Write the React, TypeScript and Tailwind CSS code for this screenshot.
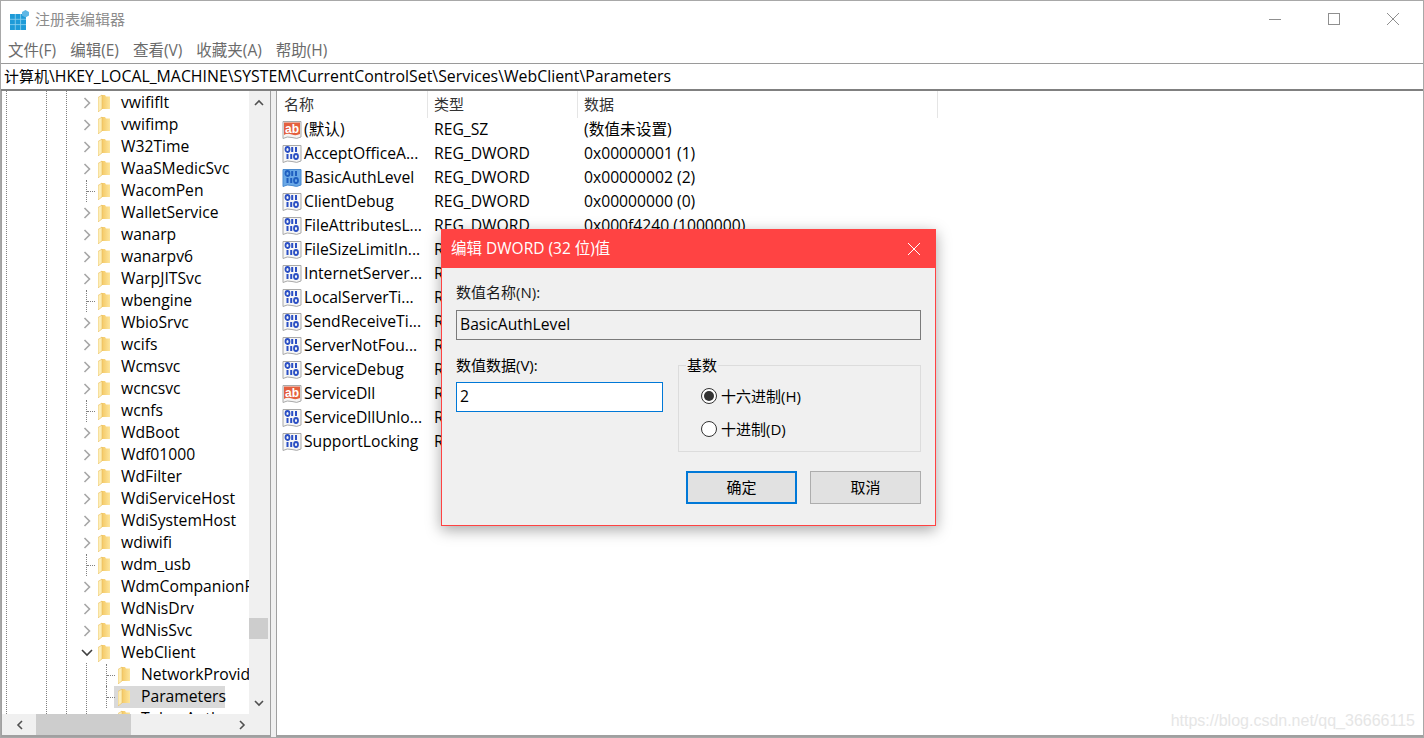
const treeRows = [
  "vwififlt", "vwifimp", "W32Time", "WaaSMedicSvc", "WacomPen", "WalletService", "wanarp", "wanarpv6",
  "WarpJITSvc", "wbengine", "WbioSrvc", "wcifs", "Wcmsvc", "wcncsvc", "wcnfs", "WdBoot", "Wdf01000",
  "WdFilter", "WdiServiceHost", "WdiSystemHost", "wdiwifi", "wdm_usb", "WdmCompanionFilter", "WdNisDrv", "WdNisSvc",
];
const noArrow = ["WacomPen", "wbengine", "wcnfs", "wdm_usb"];

// rows below the fifth have their data column hidden behind the dialog
const values = [
  { name: "(默认)", type: "REG_SZ", data: "(数值未设置)", icon: "sz" },
  { name: "AcceptOfficeA...", type: "REG_DWORD", data: "0x00000001 (1)", icon: "bin" },
  { name: "BasicAuthLevel", type: "REG_DWORD", data: "0x00000002 (2)", icon: "sel" },
  { name: "ClientDebug", type: "REG_DWORD", data: "0x00000000 (0)", icon: "bin" },
  { name: "FileAttributesL...", type: "REG_DWORD", data: "0x000f4240 (1000000)", icon: "bin" },
  { name: "FileSizeLimitIn...", type: "R", data: "", icon: "bin" },
  { name: "InternetServer...", type: "R", data: "", icon: "bin" },
  { name: "LocalServerTi...", type: "R", data: "", icon: "bin" },
  { name: "SendReceiveTi...", type: "R", data: "", icon: "bin" },
  { name: "ServerNotFou...", type: "R", data: "", icon: "bin" },
  { name: "ServiceDebug", type: "R", data: "", icon: "bin" },
  { name: "ServiceDll", type: "R", data: "", icon: "sz" },
  { name: "ServiceDllUnlo...", type: "R", data: "", icon: "bin" },
  { name: "SupportLocking", type: "R", data: "", icon: "bin" },
];

function Folder() {
  return (
    <svg width="12" height="18" viewBox="0 0 12 18" className="shrink-0">
      <defs>
        <linearGradient id="folderBody" x1="0" y1="0" x2="1" y2="0">
          <stop offset="0" stopColor="#f3c660" />
          <stop offset="1" stopColor="#fde59c" />
        </linearGradient>
      </defs>
      <path d="M3 1 H7 L8 2.500 H12 V15 H3 Z" fill="url(#folderBody)" />
      <path d="M0 3.500 L4 1 V15 L0 18 Z" fill="#fdeeb8" stroke="#e9bd5c" strokeWidth="0.600" />
    </svg>
  );
}

function Chevron({ open }: { open?: boolean }) {
  return open ? (
    <svg width="12" height="8" viewBox="0 0 12 8">
      <path d="M1 1 L6 6 L11 1" fill="none" stroke="#404040" strokeWidth="1.600" />
    </svg>
  ) : (
    <svg width="8" height="12" viewBox="0 0 8 12">
      <path d="M1.500 1 L6.500 6 L1.500 11" fill="none" stroke="#a6a6a6" strokeWidth="1.600" />
    </svg>
  );
}

function ValueIcon({ kind }: { kind: string }) {
  if (kind === "sz") {
    return (
      <svg width="20" height="20" viewBox="0 0 20 20" className="shrink-0">
        <path d="M1 1.500 H19 V17 Q15 19.500 10 17.500 Q5 16 1 18.500 Z" fill="#f4f4f4" stroke="#a9a9a9" />
        <path d="M2 2.500 H18 V14 Q14 16 10 14.500 Q5 13 2 15 Z" fill="#e4603f" />
        <text x="10" y="12.500" textAnchor="middle" fontSize="12" fontWeight="700" fill="#fff" fontFamily="'Liberation Sans', sans-serif">ab</text>
      </svg>
    );
  }
  const sel = kind === "sel";
  const ink = sel ? "#1f5fc0" : "#2b4fc4";
  return (
    <svg width="20" height="20" viewBox="0 0 20 20" className="shrink-0">
      <path d="M1 1.500 H19 V17 Q15 19.500 10 17.500 Q5 16 1 18.500 Z" fill={sel ? "#6aa8e6" : "#f6f6f6"} stroke={sel ? "#4a8bd0" : "#a9a9a9"} />
      <ellipse cx="5.500" cy="5.500" rx="2" ry="2.500" fill="none" stroke={ink} strokeWidth="1.800" />
      <rect x="9.200" y="3" width="2" height="5" fill={ink} />
      <rect x="13" y="3" width="2" height="5" fill={ink} />
      <rect x="4.500" y="10" width="2" height="5" fill={ink} />
      <rect x="8.200" y="10" width="2" height="5" fill={ink} />
      <ellipse cx="14" cy="12.500" rx="2" ry="2.500" fill="none" stroke={ink} strokeWidth="1.800" />
    </svg>
  );
}

function TreeRow({ name, indent, arrow, selected }: { name: string; indent: number; arrow?: "open" | "closed" | "none"; selected?: boolean }) {
  return (
    <div className="flex h-[22px] items-center" style={{ paddingLeft: indent }}>
      <div className="relative flex h-full w-[18px] shrink-0 items-center justify-center pl-[3px]">
        {arrow === "open" && <Chevron open />}
        {arrow === "closed" && <Chevron />}
        {!arrow && (
          <>
            <div className="absolute top-0 bottom-0 left-[10px] border-l border-dotted border-[#808080]" />
            <div className="absolute top-[11px] left-[11px] w-[8px] border-t border-dotted border-[#808080]" />
          </>
        )}
      </div>
      <div className={`flex h-[22px] items-center pl-[4px] ${selected ? "w-[111px] bg-[#d9d9d9]" : ""}`}>
        <Folder />
        <span className="ml-[11px] whitespace-nowrap">{name}</span>
      </div>
    </div>
  );
}

function App() {
  return (
    <div className="relative flex h-[738px] w-[1424px] flex-col overflow-hidden border border-[#a8a8a8] bg-white text-[15.7px] leading-none text-black [font-family:'Open_Sans','Noto_Sans_CJK_SC',sans-serif]">
      {/* title bar */}
      <div className="flex h-[37px] shrink-0 items-center pl-[9px]">
        <svg width="20" height="20" viewBox="0 0 20 20">
          <path d="M0 4 H16 V20 H0 Z" fill="#1e9bd8" />
          <path d="M5.300 4 V20 M10.600 4 V20 M0 9.300 H16 M0 14.600 H16" stroke="#8fd2f0" strokeWidth="0.800" />
          <path d="M15.500 0 L19 2 V5.500 L15.500 7.500 L12 5.500 V2 Z" fill="#5fb7e5" />
        </svg>
        <span className="ml-[5px] text-[15px] text-[#8c8c8c]">注册表编辑器</span>
        <div className="ml-auto flex items-center pr-[24px] pb-[1px]">
          <div className="mr-[47px] h-px w-[12px] bg-[#8f8f8f]" />
          <div className="mr-[47px] h-[12px] w-[12px] border border-[#8f8f8f]" />
          <svg width="12" height="12" viewBox="0 0 12 12">
            <path d="M0 0 L12 12 M12 0 L0 12" stroke="#8f8f8f" />
          </svg>
        </div>
      </div>
      {/* menu */}
      <div className="flex h-[25px] shrink-0 items-center gap-[14px] pl-[7px] text-[15.5px] text-[#6b6b6b]">
        {["文件(F)", "编辑(E)", "查看(V)", "收藏夹(A)", "帮助(H)"].map((m) => (
          <span key={m}>{m}</span>
        ))}
      </div>
      {/* address */}
      <div className="flex h-[28px] shrink-0 items-center border-t border-b-2 border-t-[#9a9a9a] border-b-[#808080] pl-[3px] text-[15.85px] whitespace-nowrap">
        <span className="text-[15px]">计算机</span>\HKEY_LOCAL_MACHINE\SYSTEM\CurrentControlSet\Services\WebClient\Parameters
      </div>
      {/* panes */}
      <div className="flex min-h-0 flex-1">
        {/* tree */}
        <div className="relative flex w-[270px] shrink-0 flex-col border-r border-b-2 border-l border-[#a0a0a0]">
          <div className="flex min-h-0 flex-1">
            <div className="relative min-w-0 flex-1 overflow-hidden pt-px">
              <div className="absolute top-0 bottom-0 left-[4px] border-l border-dotted border-[#808080]" />
              <div className="absolute top-0 bottom-0 left-[44px] border-l border-dotted border-[#808080]" />
              <div className="absolute top-0 bottom-0 left-[64px] border-l border-dotted border-[#808080]" />
              <div className="absolute top-[572px] bottom-0 left-[84px] border-l border-dotted border-[#808080]" />
              {treeRows.map((name) => (
                <TreeRow key={name} name={name} indent={74} arrow={noArrow.includes(name) ? undefined : "closed"} />
              ))}
              <TreeRow name="WebClient" indent={74} arrow="open" />
              <TreeRow name="NetworkProvider" indent={94} />
              <TreeRow name="Parameters" indent={94} selected />
              <TreeRow name="TokenAuth" indent={94} arrow="none" />
            </div>
            {/* vertical scrollbar */}
            <div className="flex w-[21px] shrink-0 flex-col bg-[#f0f0f0] pr-[2px]">
              <div className="flex h-[22px] items-center justify-center">
                <svg width="10" height="7" viewBox="0 0 10 7"><path d="M1 6 L5 2 L9 6" fill="none" stroke="#505050" strokeWidth="1.600" /></svg>
              </div>
              <div className="mt-[505px] h-[21px] bg-[#cdcdcd]" />
              <div className="mt-auto flex h-[22px] items-center justify-center">
                <svg width="10" height="7" viewBox="0 0 10 7"><path d="M1 1 L5 5 L9 1" fill="none" stroke="#505050" strokeWidth="1.600" /></svg>
              </div>
            </div>
          </div>
          {/* horizontal scrollbar */}
          <div className="flex h-[21px] shrink-0 items-center bg-[#f0f0f0]">
            <div className="flex w-[34px] justify-center">
              <svg width="7" height="10" viewBox="0 0 7 10"><path d="M6 1 L2 5 L6 9" fill="none" stroke="#505050" strokeWidth="1.600" /></svg>
            </div>
            <div className="h-full w-[95px] bg-[#cdcdcd]" />
            <div className="ml-auto flex w-[55px] justify-center">
              <svg width="7" height="10" viewBox="0 0 7 10"><path d="M1 1 L5 5 L1 9" fill="none" stroke="#505050" strokeWidth="1.600" /></svg>
            </div>
          </div>
        </div>
        {/* splitter */}
        <div className="w-[5px] shrink-0 bg-[#f0f0f0]" />
        {/* values */}
        <div className="relative min-w-0 flex-1 border-b-2 border-l border-[#a0a0a0]">
          <div className="flex h-[27px] items-center text-[15px] text-[#333]">
            <div className="h-full w-[151px] border-r border-[#e5e5e5] pt-[6px] pl-[7px]">名称</div>
            <div className="h-full w-[150px] border-r border-[#e5e5e5] pt-[6px] pl-[6px]">类型</div>
            <div className="h-full w-[360px] border-r border-[#e5e5e5] pt-[6px] pl-[6px]">数据</div>
          </div>
          {values.map((v) => (
            <div key={v.name} className="flex h-[24px] items-center">
              <div className="flex w-[151px] items-center pl-[5px]">
                <ValueIcon kind={v.icon} />
                <span className="ml-[2px] whitespace-nowrap">{v.name}</span>
              </div>
              <div className="w-[150px] pl-[6px] whitespace-nowrap">{v.type}</div>
              <div className="pl-[6px] whitespace-nowrap">{v.data}</div>
            </div>
          ))}
          <div className="absolute right-[8px] bottom-[6px] text-[16px] text-[#e6e6e6] [font-family:'Liberation_Sans',sans-serif]">
            https://blog.csdn.net/qq_36666115
          </div>
        </div>
      </div>

      {/* dialog */}
      <div className="absolute top-[228px] left-[440px] flex h-[297px] w-[495px] flex-col border border-[#ff4343] bg-[#f0f0f0] shadow-[0_4px_14px_rgba(0,0,0,0.35)]">
        <div className="flex h-[38px] shrink-0 items-center justify-between bg-[#ff4343] pr-[15px] pb-px pl-[9px] text-[15.5px] text-white">
          <span>编辑 DWORD (32 位)值</span>
          <svg width="12" height="12" viewBox="0 0 12 12"><path d="M0 0 L12 12 M12 0 L0 12" stroke="#fff" /></svg>
        </div>
        <div className="flex flex-1 flex-col px-[14px] pt-[17px]">
          <div className="text-[15px] text-[#1a1a1a]">数值名称(N):</div>
          <div className="mt-[10px] flex h-[30px] items-center border border-[#7a7a7a] pl-[3px]">BasicAuthLevel</div>
          <div className="mt-[19px] flex justify-between">
            <div className="flex w-[207px] flex-col text-[15px]">
              <div className="mt-[-1px]">数值数据(V):</div>
              <div className="mt-[9px] flex h-[30px] items-center border border-[#0078d7] bg-white pl-[3px] text-[15.7px]">2</div>
            </div>
            <fieldset className="relative mt-[6px] h-[87px] w-[243px] border border-[#dcdcdc] text-[15px]">
              <span className="absolute -top-[8px] left-[7px] bg-[#f0f0f0] px-px">基数</span>
              <div className="flex items-center pt-[22px] pl-[22px]">
                <span className="flex h-[16px] w-[16px] items-center justify-center rounded-full border border-[#333] bg-white">
                  <span className="h-[10px] w-[10px] rounded-full bg-[#333]" />
                </span>
                <span className="ml-[4px]">十六进制(H)</span>
              </div>
              <div className="flex items-center pt-[17px] pl-[22px]">
                <span className="h-[16px] w-[16px] rounded-full border border-[#333] bg-white" />
                <span className="ml-[4px]">十进制(D)</span>
              </div>
            </fieldset>
          </div>
          <div className="mt-[19px] flex justify-end gap-[13px] text-[15px]">
            <div className="flex h-[33px] w-[111px] items-center justify-center border-2 border-[#0078d7] bg-[#e1e1e1]">确定</div>
            <div className="flex h-[33px] w-[111px] items-center justify-center border border-[#adadad] bg-[#e1e1e1]">取消</div>
          </div>
        </div>
      </div>
    </div>
  );
}

export default App;
